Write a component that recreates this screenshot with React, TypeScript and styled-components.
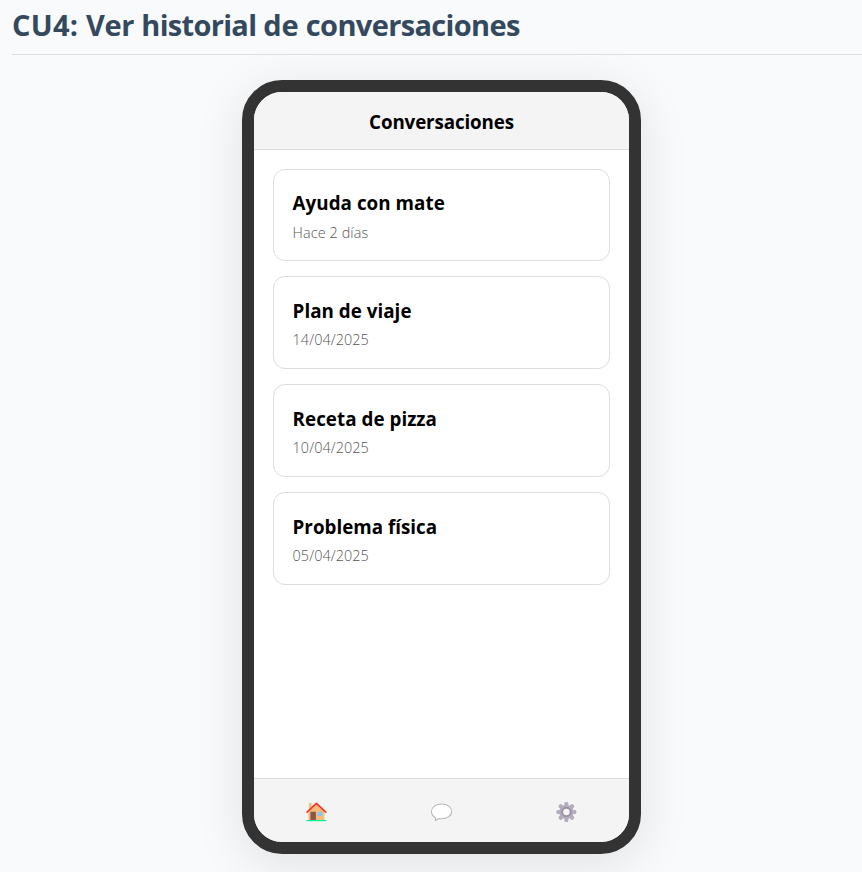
import React from "react";
import styled, { createGlobalStyle } from "styled-components";

const GlobalStyle = createGlobalStyle`
  * { box-sizing: border-box; }
  body {
    margin: 0;
    background: #f8fafc;
    font-family: "Segoe UI", "Open Sans", "Noto Sans", sans-serif;
    overflow: hidden;
  }
`;

const Page = styled.main`
  height: 872px;
  padding-left: 12px;
  overflow: hidden;
`;

const Title = styled.h1`
  margin: 0 0 25px;
  height: 55px;
  padding-top: 5px;
  border-bottom: 1px solid #dcdfe3;
  color: #34495e;
  font-size: 29px;
  font-weight: 700;
  line-height: 40px;
  white-space: nowrap;
`;

const Word = styled.span<{ $tracking: number }>`
  letter-spacing: ${(p) => p.$tracking}px;
`;

const Phone = styled.section`
  display: flex;
  flex-direction: column;
  width: 399px;
  height: 774px;
  margin-left: 230px;
  border: 12px solid #333;
  border-radius: 40px;
  background: #fff;
  box-shadow: 0 10px 50px rgba(0, 0, 0, 0.1);
  overflow: hidden;
`;

const Header = styled.header`
  height: 58px;
  flex: none;
  border-bottom: 1px solid #ddd;
  background: #f4f4f4;
  text-align: center;
  font-size: 18.8px;
  font-weight: 700;
  line-height: 61px;
  letter-spacing: -0.13px;
`;

const List = styled.div`
  flex: 1;
  display: flex;
  flex-direction: column;
  gap: 15.2px;
  padding: 18.6px 19.2px;
`;

const Card = styled.article`
  height: 92.6px;
  padding: 19.6px 18.4px;
  border: 1px solid #ddd;
  border-radius: 12px;
`;

const CardTitle = styled.h2<{ $tracking: number }>`
  margin: 0;
  color: #000;
  font-size: 18.8px;
  font-weight: 700;
  line-height: 28px;
  letter-spacing: ${(p) => p.$tracking}px;
`;

const CardDate = styled.p<{ $tracking: number }>`
  margin: 3.4px 0 0;
  color: #555;
  font-size: 14.4px;
  font-weight: 300;
  line-height: 24px;
  letter-spacing: ${(p) => p.$tracking}px;
`;

const NavBar = styled.nav`
  display: flex;
  flex: none;
  height: 64px;
  border-top: 1px solid #ddd;
  background: #f4f4f4;
`;

const NavItem = styled.a`
  flex: 1;
  display: flex;
  align-items: center;
  justify-content: center;
  padding: 2px 1px 0 0;
`;

const Icon = styled.svg`
  display: block;
  width: 22px;
  height: 22px;
  overflow: visible;
`;

const HomeIcon = () => (
  <Icon viewBox="-0.4 0 22 22">
    <path d="M3.500 2h2.600v7H3.500z" fill="#f3bd78" />
    <path d="M3 10 11 3l8 7v9.500H3z" fill="#f3bd78" />
    <path d="M5 10.700h5.500v8.300H5z" fill="#8b5745" />
    <path d="M12.200 10.700h4.200v4.300h-4.200z" fill="#80c7fc" />
    <path d="M1.600 11.200 11 2.400l9.400 8.800" fill="none" stroke="#f8312f" strokeWidth="1.600" strokeLinecap="round" strokeLinejoin="round" />
    <path d="M1 19h20v1.300H1z" fill="#00f29b" />
  </Icon>
);

const ChatIcon = () => (
  <Icon viewBox="-0.4 0 22 22">
    <path d="M11.200 3C5.400 3 1.100 6.200 1.100 10.400c0 2.500 1.500 4.700 3.900 6l-.1 3.100 3.700-1.900c.8.200 1.700.200 2.600.200 5.800 0 10.100-3.200 10.100-7.400S17 3 11.200 3Z" fill="#fff" stroke="#b8b8b8" strokeWidth="1.100" strokeLinejoin="round" />
  </Icon>
);

const GearIcon = () => (
  <Icon viewBox="-0.4 0 22 22">
    {[0, 45, 90, 135].map((angle) => (
      <rect key={angle} x="9" y="1" width="4" height="20" rx="1.500" fill="#b4acbc" transform={`rotate(${angle} 11 11)`} />
    ))}
    <circle cx="11" cy="11" r="7.200" fill="#b4acbc" />
    <circle cx="11" cy="11" r="4.200" fill="#f4f4f4" stroke="#998ea4" strokeWidth="1.800" />
  </Icon>
);

const titleWords = [
  { text: "CU4: ", tracking: 0.25 },
  { text: "Ver ", tracking: -0.35 },
  { text: "historial ", tracking: -0.7 },
  { text: "de ", tracking: -0.1 },
  { text: "conversaciones", tracking: -0.65 },
];

const conversations = [
  { title: "Ayuda con mate", date: "Hace 2 días", titleTracking: 0.04, dateTracking: 0.1 },
  { title: "Plan de viaje", date: "14/04/2025", titleTracking: 0.03, dateTracking: 0.08 },
  { title: "Receta de pizza", date: "10/04/2025", titleTracking: 0.04, dateTracking: 0.08 },
  { title: "Problema física", date: "05/04/2025", titleTracking: 0, dateTracking: 0.08 },
];

export default function App() {
  return (
    <Page>
      <GlobalStyle />
      <Title>
        {titleWords.map((w) => (
          <Word key={w.text} $tracking={w.tracking}>{w.text}</Word>
        ))}
      </Title>
      <Phone>
        <Header>Conversaciones</Header>
        <List>
          {conversations.map((c) => (
            <Card key={c.title}>
              <CardTitle $tracking={c.titleTracking}>{c.title}</CardTitle>
              <CardDate $tracking={c.dateTracking}>{c.date}</CardDate>
            </Card>
          ))}
        </List>
        <NavBar>
          <NavItem aria-label="Inicio"><HomeIcon /></NavItem>
          <NavItem aria-label="Conversaciones"><ChatIcon /></NavItem>
          <NavItem aria-label="Ajustes"><GearIcon /></NavItem>
        </NavBar>
      </Phone>
    </Page>
  );
}
